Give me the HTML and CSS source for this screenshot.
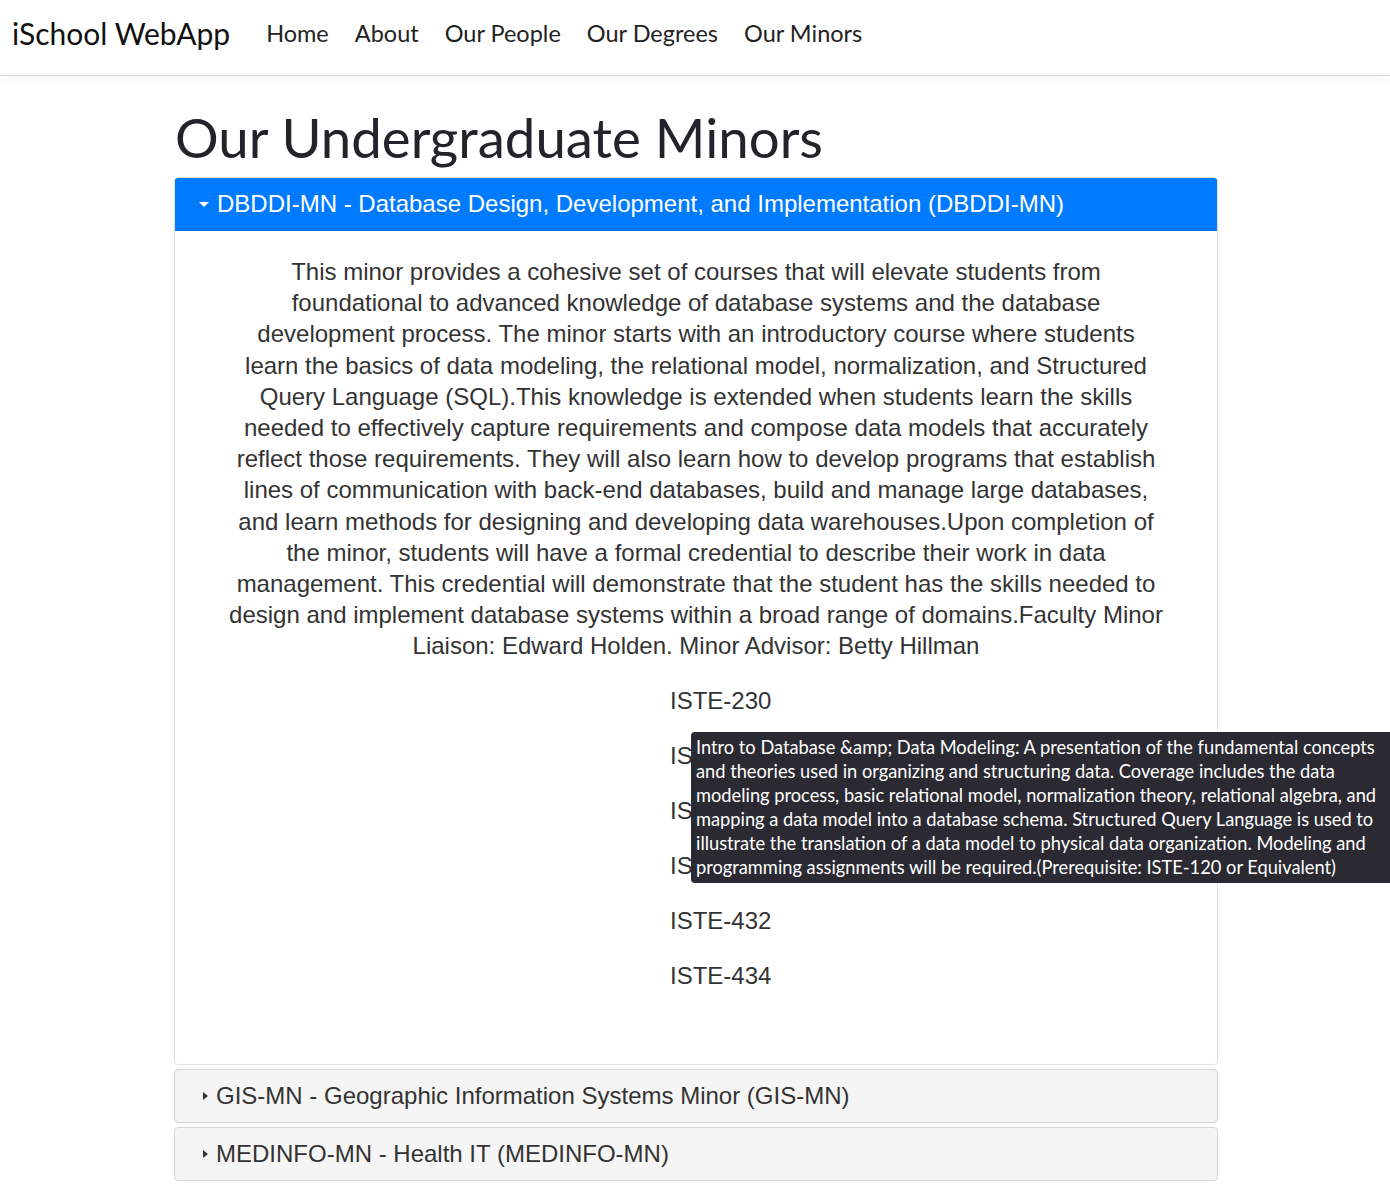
FILE: index.html
```html
<!DOCTYPE html>
<html lang="en">
<head>
<meta charset="utf-8">
<title>iSchool WebApp - Our Minors</title>
<link rel="stylesheet" href="styles.css">
</head>
<body>
<nav class="navbar">
  <a class="brand" href="#">iSchool WebApp</a>
  <ul class="nav-links">
    <li><a href="#">Home</a></li>
    <li><a href="#">About</a></li>
    <li><a href="#">Our People</a></li>
    <li><a href="#">Our Degrees</a></li>
    <li><a href="#">Our Minors</a></li>
  </ul>
</nav>
<main class="container">
  <h1 class="page-title">Our Undergraduate Minors</h1>
  <div class="accordion">
    <section class="card open">
      <button class="card-header active"><span class="caret-down"></span>DBDDI-MN - Database Design, Development, and Implementation (DBDDI-MN)</button>
      <div class="card-body">
        <p class="description">This minor provides a cohesive set of courses that will elevate students from foundational to advanced knowledge of database systems and the database development process. The minor starts with an introductory course where students learn the basics of data modeling, the relational model, normalization, and Structured Query Language (SQL).This knowledge is extended when students learn the skills needed to effectively capture requirements and compose data models that accurately reflect those requirements. They will also learn how to develop programs that establish lines of communication with back-end databases, build and manage large databases, and learn methods for designing and developing data warehouses.Upon completion of the minor, students will have a formal credential to describe their work in data management. This credential will demonstrate that the student has the skills needed to design and implement database systems within a broad range of domains.Faculty Minor Liaison: Edward Holden. Minor Advisor: Betty Hillman</p>
        <ul class="courses">
          <li>ISTE-230</li>
          <li>ISTE-330</li>
          <li>ISTE-420</li>
          <li>ISTE-430</li>
          <li>ISTE-432</li>
          <li>ISTE-434</li>
        </ul>
      </div>
    </section>
    <section class="card">
      <button class="card-header"><span class="caret-right"></span>GIS-MN - Geographic Information Systems Minor (GIS-MN)</button>
    </section>
    <section class="card">
      <button class="card-header"><span class="caret-right"></span>MEDINFO-MN - Health IT (MEDINFO-MN)</button>
    </section>
    <section class="card">
      <button class="card-header"><span class="caret-right"></span>MOBDEV-MN - Mobile Development (MOBDEV-MN)</button>
    </section>
  </div>
</main>
<div class="tooltip">Intro to Database &amp;amp; Data Modeling: A presentation of the fundamental concepts<br>and theories used in organizing and structuring data. Coverage includes the data<br>modeling process, basic relational model, normalization theory, relational algebra, and<br>mapping a data model into a database schema. Structured Query Language is used to<br>illustrate the translation of a data model to physical data organization. Modeling and<br>programming assignments will be required.(Prerequisite: ISTE-120 or Equivalent)</div>
</body>
</html>
```

FILE: styles.css
```css
* { box-sizing: border-box; }
html, body { margin: 0; padding: 0; }
body {
  font-family: "Liberation Sans", Arial, sans-serif;
  color: #212529;
  background: #fff;
  overflow: hidden;
  height: 1185px;
}
.navbar {
  display: flex;
  align-items: center;
  height: 76px;
  padding: 0 12px 9px;
  border-bottom: 1px solid #dcdcdc;
  box-shadow: 0 3px 14px rgba(0, 0, 0, 0.035);
  font-family: "Lato", "Open Sans", sans-serif;
}
.brand {
  font-size: 30px;
  color: #111;
  text-decoration: none;
  margin-right: 24px;
}
.nav-links {
  display: flex;
  list-style: none;
  margin: 0;
  padding: 0;
  gap: 2px;
}
.nav-links a {
  display: block;
  padding: 0 12px;
  font-size: 23.5px;
  color: #222;
  text-decoration: none;
}
.container {
  width: 1044px;
  margin: 0 0 0 calc(50% - 521px);
}
.page-title {
  font-family: "Lato", "Open Sans", sans-serif;
  font-weight: 400;
  font-size: 54.6px;
  line-height: 66px;
  color: #212529;
  margin: 28px 0 7px 1px;
}
.accordion {
  display: flex;
  flex-direction: column;
  gap: 4px;
}
.card {
  border: 1px solid #d6d6d6;
  border-radius: 4px;
  background: #f5f5f5;
  overflow: hidden;
}
.card.open {
  background: #fff;
  border-color: #e3e3e3;
}
.card-header {
  display: flex;
  align-items: center;
  width: 100%;
  height: 52px;
  padding: 0 0 0 28px;
  border: none;
  background: transparent;
  font-family: "Liberation Sans", Arial, sans-serif;
  font-size: 24px;
  color: #333;
  text-align: left;
  cursor: pointer;
}
.card-header.active {
  height: 54px;
  margin: -1px -1px 0 -1px;
  width: calc(100% + 2px);
  padding-left: 24px;
  background: #007bff;
  border: 1px solid #0a6fe0;
  border-radius: 4px 4px 0 0;
  color: #fff;
}
.caret-down {
  width: 0; height: 0;
  border-left: 5px solid transparent;
  border-right: 5px solid transparent;
  border-top: 5px solid #fff;
  margin-right: 8px;
}
.caret-right {
  width: 0; height: 0;
  border-top: 4.5px solid transparent;
  border-bottom: 4.5px solid transparent;
  border-left: 5px solid #333;
  margin-right: 8px;
}
.card-body {
  padding: 25px 0 61px;
}
.description {
  width: 937px;
  margin: 0 auto 11px;
  text-align: center;
  font-size: 24px;
  line-height: 31.2px;
  color: #333;
}
.courses {
  list-style: none;
  margin: 0;
  padding: 0 0 0 calc(50% - 26px);
}
.courses li {
  font-size: 24px;
  line-height: 55px;
  color: #333;
}
.tooltip {
  position: absolute;
  left: 691px;
  top: 732px;
  width: 710px;
  padding: 3px 5px 4px;
  background: #2b2a32;
  color: #fff;
  border-radius: 4px;
  font-family: "Lato", "Open Sans", sans-serif;
  font-size: 18.25px;
  line-height: 24px;
  white-space: nowrap;
}
```
